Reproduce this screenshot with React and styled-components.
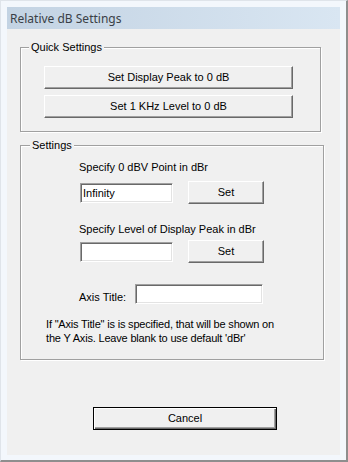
import React from "react";
import styled, { createGlobalStyle } from "styled-components";

const Global = createGlobalStyle`
  html, body { margin: 0; padding: 0; background: #f2f6fb; }
  * { box-sizing: border-box; }
`;

const Window = styled.div`
  width: 348px;
  height: 462px;
  background: #f3f7fc;
  border-left: 1px solid #dfe4ea;
  border-top: 1px solid #dfe4ea;
  border-right: 2px solid #8e8e8e;
  border-bottom: 2px solid #8e8e8e;
  padding: 6px 6px 5px 6px;
  display: flex;
  flex-direction: column;
`;

const TitleBar = styled.div`
  height: 22px;
  flex: none;
  background: linear-gradient(to right, #c3d3e3, #d9e6f2);
  display: flex;
  align-items: center;
  padding-left: 3px;
`;

const Title = styled.span`
  font-family: "Noto Sans", "Open Sans", sans-serif;
  font-size: 12px;
  color: #3a3f46;
`;

const Client = styled.div`
  flex: 1;
  background: #f0f0f0;
  padding: 18px 0 0 13px;
  display: flex;
  flex-direction: column;
  font-family: "Liberation Sans", Arial, sans-serif;
  font-size: 11px;
  line-height: 13px;
  color: #000;
`;

const Group = styled.div`
  position: relative;
  width: ${(p) => p.$w}px;
  height: ${(p) => p.$h}px;
  margin-top: ${(p) => p.$mt}px;
  border: 1px solid #a0a0a0;
  box-shadow: inset 1px 1px 0 #fff, 1px 1px 0 #fff;
  display: flex;
  flex-direction: column;
  padding: ${(p) => p.$pad};
`;

const Legend = styled.span`
  position: absolute;
  top: -7px;
  left: ${(p) => p.$left}px;
  padding: 0 2px 0 2px;
  background: #f0f0f0;
`;

const Button = styled.button`
  font: inherit;
  color: #000;
  width: ${(p) => p.$w}px;
  height: 23px;
  background: #f0f0f0;
  border: 1px solid;
  border-color: #fff #696969 #696969 #fff;
  box-shadow: inset -1px -1px 0 #a0a0a0;
  padding: 0;
  margin: 0;
  flex: none;
`;

const DefaultButton = styled(Button)`
  border: 1px solid #000;
  box-shadow: inset 1px 1px 0 #fff, inset -1px -1px 0 #696969, inset -2px -2px 0 #a0a0a0;
  margin-top: ${(p) => p.$mt}px;
  margin-left: ${(p) => p.$ml}px;
`;

const Stack = styled.div`
  display: flex;
  flex-direction: column;
  gap: ${(p) => p.$gap}px;
  margin-left: ${(p) => p.$ml || 0}px;
`;

const Label = styled.div`
  margin-top: ${(p) => p.$mt || 0}px;
  margin-left: ${(p) => p.$ml || 0}px;
  width: ${(p) => (p.$w ? `${p.$w}px` : "auto")};
  flex: none;
  white-space: nowrap;
`;

const Row = styled.div`
  display: flex;
  align-items: ${(p) => p.$align || "center"};
  gap: ${(p) => p.$gap}px;
  margin-top: ${(p) => p.$mt || 0}px;
  margin-left: ${(p) => p.$ml || 0}px;
`;

const TextBox = styled.input`
  font: inherit;
  color: #000;
  width: ${(p) => p.$w}px;
  height: 20px;
  background: #fff;
  border: 1px solid;
  border-color: #a0a0a0 #fff #fff #a0a0a0;
  box-shadow: inset 1px 1px 0 #696969, inset -1px -1px 0 #e3e3e3;
  padding: 0 0 0 2px;
  margin: 0;
  outline: none;
  flex: none;
`;

const Note = styled.p`
  margin: ${(p) => p.$mt}px 0 0 ${(p) => p.$ml}px;
  line-height: 14px;
  letter-spacing: -0.18px;
  white-space: nowrap;
`;

export default function App() {
  return (
    <>
      <Global />
      <Window>
        <TitleBar>
          <Title>Relative dB Settings</Title>
        </TitleBar>
        <Client>
          <Group $w={301} $h={85} $mt={0} $pad="18px 0 0 23px">
            <Legend $left={8}>Quick Settings</Legend>
            <Stack $gap={6}>
              <Button $w={249}>Set Display Peak to 0 dB</Button>
              <Button $w={249}>Set 1 KHz Level to 0 dB</Button>
            </Stack>
          </Group>
          <Group $w={304} $h={215} $mt={13} $pad="15px 0 0 0">
            <Legend $left={9}>Settings</Legend>
            <Label $ml={58}>Specify 0 dBV Point in dBr</Label>
            <Row $gap={15} $mt={7} $ml={59}>
              <TextBox $w={93} defaultValue="Infinity" />
              <Button $w={76}>Set</Button>
            </Row>
            <Label $ml={58} $mt={19}>Specify Level of Display Peak in dBr</Label>
            <Row $gap={15} $mt={4} $ml={59}>
              <TextBox $w={93} defaultValue="" />
              <Button $w={76}>Set</Button>
            </Row>
            <Row $gap={0} $mt={21} $ml={58} $align="flex-end">
              <Label $w={56}>Axis Title:</Label>
              <TextBox $w={128} defaultValue="" />
            </Row>
            <Note $mt={13} $ml={25}>
              If "Axis Title" is is specified, that will be shown on
              <br />
              the Y Axis. Leave blank to use default 'dBr'
            </Note>
          </Group>
          <DefaultButton $w={184} $mt={47} $ml={73}>Cancel</DefaultButton>
        </Client>
      </Window>
    </>
  );
}
